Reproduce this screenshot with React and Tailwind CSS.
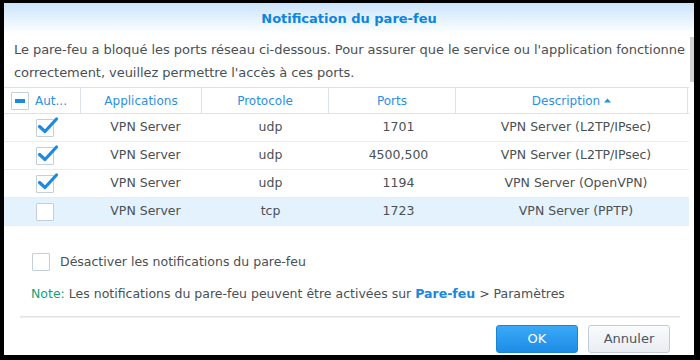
import React from "react";

const rows = [
  { checked: true, app: "VPN Server", proto: "udp", ports: "1701", desc: "VPN Server (L2TP/IPsec)" },
  { checked: true, app: "VPN Server", proto: "udp", ports: "4500,500", desc: "VPN Server (L2TP/IPsec)" },
  { checked: true, app: "VPN Server", proto: "udp", ports: "1194", desc: "VPN Server (OpenVPN)" },
  { checked: false, app: "VPN Server", proto: "tcp", ports: "1723", desc: "VPN Server (PPTP)", hl: true },
];

const Box = ({ checked, minus }) => (
  <span className="relative block w-[18px] h-[18px] border border-[#c4cfda] bg-white rounded-[1px] shrink-0">
    {minus && <span className="absolute left-[3px] top-[6px] w-[10px] h-[4px] bg-[#1a8ae5]" />}
    {checked && (
      <svg className="absolute left-[1px] top-[-3px] overflow-visible" width="20" height="18" viewBox="0 0 20 18">
        <path d="M1.5 9.5 L7 14.5 L18.5 2" fill="none" stroke="#1a8ae5" strokeWidth="3.2" strokeLinecap="round" strokeLinejoin="round" />
      </svg>
    )}
  </span>
);

const App = () => {
  return (
    <div className="w-[700px] h-[360px] bg-black pt-[3px] pl-[4px]" style={{ fontFamily: "'DejaVu Sans', Verdana, sans-serif" }}>
      <div className="relative w-[690px] h-[352px] bg-white flex flex-col">
        <div className="h-[31px] bg-gradient-to-b from-[#cbe4fb] to-white flex items-center justify-center">
          <span className="text-[13px] font-bold text-[#0a86e0] mt-[1px]">Notification du pare-feu</span>
        </div>
        <div className="absolute right-0 top-[34px] w-[4px] h-[45px] bg-[#d2d2d2]" />
        <p className="pl-[10px] pr-[4px] pt-[4px] text-[13px] leading-[23px] text-[#4a5055] tracking-[-0.05px]">
          Le pare-feu a bloqué les ports réseau ci-dessous. Pour assurer que le service ou l'application fonctionne correctement, veuillez permettre l'accès à ces ports.
        </p>
        <div className="mt-[3px] w-[685px] border-t border-[#dbe3ea]">
          <div className="flex h-[26px] border-b border-[#dbe3ea] text-[12px] text-[#2b8fe3]">
            <div className="w-[77px] flex items-center gap-[6px] pl-[7px] border-r border-[#dbe3ea]">
              <Box minus />
              <span>Aut...</span>
            </div>
            <div className="w-[121px] flex items-center justify-center border-r border-[#dbe3ea]">Applications</div>
            <div className="w-[127px] flex items-center justify-center border-r border-[#dbe3ea]">Protocole</div>
            <div className="w-[127px] flex items-center justify-center border-r border-[#dbe3ea]">Ports</div>
            <div className="w-[232px] flex items-center justify-center border-r border-[#dbe3ea] gap-[4px]">
              Description
              <svg width="7" height="5" viewBox="0 0 7 5"><path d="M0 4.5 L3.5 0.5 L7 4.5Z" fill="#2b8fe3" /></svg>
            </div>
          </div>
          {rows.map((r, i) => (
            <div key={i} className={`flex h-[28px] border-b border-[#e9edf1] text-[12.5px] text-[#4a5055] ${r.hl ? "bg-[#e4f2fd]" : ""}`}>
              <div className="w-[77px] flex items-center pl-[32px]">
                <Box checked={r.checked} />
              </div>
              <div className="w-[121px] flex items-center justify-center pl-[8px]">{r.app}</div>
              <div className="w-[127px] flex items-center justify-center pl-[10px]">{r.proto}</div>
              <div className="w-[127px] flex items-center justify-center pl-[12px]">{r.ports}</div>
              <div className="w-[232px] flex items-center justify-center pl-[8px]">{r.desc}</div>
            </div>
          ))}
        </div>
        <label className="mt-[27px] ml-[28px] flex items-center gap-[10px] text-[12.5px] text-[#4a5055]">
          <Box />
          <span>Désactiver les notifications du pare-feu</span>
        </label>
        <p className="mt-[13px] ml-[27px] text-[12.5px] text-[#4a5055]">
          <span className="text-[#19a07a]">Note:</span> Les notifications du pare-feu peuvent être activées sur{" "}
          <span className="font-bold text-[#1a88e0]">Pare-feu</span> &gt; Paramètres
        </p>
        <div className="mt-[12px] mx-[16px] w-[660px] h-[2px] bg-gradient-to-b from-[#dcdfe2] to-[#f2f3f4]" />
        <div className="mt-[7px] flex justify-end gap-[10px] pr-[24px]">
          <button className="w-[82px] h-[28px] rounded-[3px] border border-[#1c84d6] bg-gradient-to-b from-[#3aa9f7] to-[#1c8ce6] text-white text-[13px]">OK</button>
          <button className="w-[82px] h-[28px] rounded-[3px] border border-[#c3ccd6] bg-gradient-to-b from-[#f9fbfc] to-[#e9eef3] text-[#4a5560] text-[13px]">Annuler</button>
        </div>
      </div>
    </div>
  );
};

export default App;
